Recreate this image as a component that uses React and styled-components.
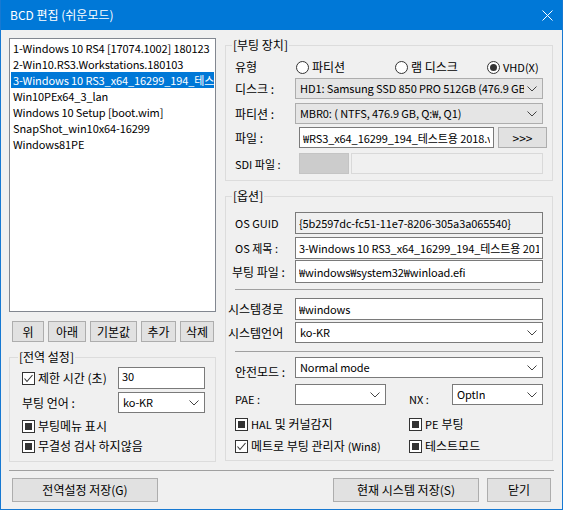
import React from 'react'
import styled, { createGlobalStyle } from 'styled-components'

const GlobalStyle = createGlobalStyle`
    html, body {
        margin: 0;
        padding: 0;
        background: #f0f0f0;
    }
    body {
        font-family: "Noto Sans CJK KR", "Liberation Sans", sans-serif;
        font-size: 12px;
        color: #000;
    }
    * {
        box-sizing: border-box;
    }
`

const entries = [
    '1-Windows 10 RS4 [17074.1002] 180123',
    '2-Win10.RS3.Workstations.180103',
    '3-Windows 10 RS3_x64_16299_194_테스트용 2018',
    'Win10PEx64_3_lan',
    'Windows 10 Setup [boot.wim]',
    'SnapShot_win10x64-16299',
    'Windows81PE',
]

function Chevron() {
    return (
        <svg width="10" height="6" viewBox="0 0 10 6">
            <polyline points="0.5,0.5 5,5 9.5,0.5" fill="none" stroke="#444" strokeWidth="1" />
        </svg>
    )
}

function Select({ children, $gray }) {
    return (
        <SelectBox $gray={$gray}>
            <SelectText>{children}</SelectText>
            <Chevron />
        </SelectBox>
    )
}

function Check({ state, children }) {
    return (
        <CheckLabel>
            <CheckBox>
                {state === 'mixed' && <CheckFill />}
                {state === 'checked' && (
                    <svg width="11" height="11" viewBox="0 0 11 11">
                        <polyline points="1.5,5.5 4,8.5 9.5,2" fill="none" stroke="#333" strokeWidth="1.1" />
                    </svg>
                )}
            </CheckBox>
            {children}
        </CheckLabel>
    )
}

function Radio({ checked, children, $w }) {
    return (
        <RadioLabel $w={$w}>
            <RadioCircle>{checked && <RadioDot />}</RadioCircle>
            {children}
        </RadioLabel>
    )
}

export default function App() {
    return (
        <>
            <GlobalStyle />
            <Window>
                <TitleBar>
                    <span>BCD 편집 (쉬운모드)</span>
                    <svg width="11" height="11" viewBox="0 0 11 11">
                        <path d="M0.5 0.5 L10.5 10.5 M10.5 0.5 L0.5 10.5" stroke="#fff" strokeWidth="1" />
                    </svg>
                </TitleBar>

                <Body>
                    <LeftCol>
                        <ListBox>
                            {entries.map((e, i) => (
                                <ListItem key={e} $selected={i === 2}>{e}</ListItem>
                            ))}
                        </ListBox>

                        <ButtonRow>
                            <Button $w={32}>위</Button>
                            <Button $w={38}>아래</Button>
                            <Button $w={47}>기본값</Button>
                            <Button $w={35}>추가</Button>
                            <Button $w={34}>삭제</Button>
                        </ButtonRow>

                        <GroupBox $pad="3px 9px 8px 12px" $mt={8}>
                            <Legend $ml={-4}>[전역 설정]</Legend>
                            <Row $cols="96px 87px" $h={22}>
                                <Check state="checked">제한 시간 (초)</Check>
                                <TextBox readOnly value="30" $top />
                            </Row>
                            <Row $cols="96px 87px" $h={21} $mt={3}>
                                <Label>부팅 언어 :</Label>
                                <Select>ko-KR</Select>
                            </Row>
                            <CheckRow $mt={6}>
                                <Check state="mixed">부팅메뉴 표시</Check>
                            </CheckRow>
                            <CheckRow $mt={6}>
                                <Check state="mixed">무결성 검사 하지않음</Check>
                            </CheckRow>
                        </GroupBox>
                    </LeftCol>

                    <RightCol>
                        <GroupBox $pad="5px 9px 6px 9px">
                            <Legend $ml={-3}>[부팅 장치]</Legend>
                            <Row $cols="60px 1fr" $h={20}>
                                <Label>유형</Label>
                                <RadioGroup>
                                    <Radio $w={99}>파티션</Radio>
                                    <Radio $w={92}>램 디스크</Radio>
                                    <Radio checked><Small>VHD(X)</Small></Radio>
                                </RadioGroup>
                            </Row>
                            <Row $cols="60px 1fr" $h={21} $mt={1}>
                                <Label>디스크 :</Label>
                                <Select $gray>HD1: Samsung SSD 850 PRO 512GB (476.9 GB,</Select>
                            </Row>
                            <Row $cols="60px 1fr" $h={21} $mt={4}>
                                <Label>파티션 :</Label>
                                <Select $gray>MBR0: ( NTFS, 476.9 GB, Q:₩, Q1)</Select>
                            </Row>
                            <Row $cols="60px 195px 49px" $gap={4} $h={21} $mt={3}>
                                <Label>파일 :</Label>
                                <TextBox readOnly value="₩RS3_x64_16299_194_테스트용 2018.vhdx" />
                                <Button $w={49}>&gt;&gt;&gt;</Button>
                            </Row>
                            <Row $cols="62px 50px 1fr" $gap={2} $h={21} $mt={5}>
                                <Label $small>SDI 파일 :</Label>
                                <Swatch />
                                <TextBox readOnly value="" $disabled />
                            </Row>
                        </GroupBox>

                        <GroupBox $pad="9px 9px 8px 9px">
                            <Legend $ml={-3}>[옵션]</Legend>
                            <Row $cols="60px 1fr" $h={22}>
                                <Label $small>OS GUID</Label>
                                <TextBox readOnly value="{5b2597dc-fc51-11e7-8206-305a3a065540}" $gray />
                            </Row>
                            <Row $cols="60px 1fr" $h={22} $mt={3}>
                                <Label $small>OS 제목 :</Label>
                                <TextBox readOnly value="3-Windows 10 RS3_x64_16299_194_테스트용 2018" />
                            </Row>
                            <Row $cols="60px 1fr" $h={23} $mt={1}>
                                <Label $indent={-3}>부팅 파일 :</Label>
                                <TextBox readOnly value="₩windows₩system32₩winload.efi" />
                            </Row>
                            <Divider $mt={6} />
                            <Row $cols="60px 1fr" $h={22} $mt={8}>
                                <Label $indent={-7}>시스템경로</Label>
                                <TextBox readOnly value="₩windows" />
                            </Row>
                            <Row $cols="60px 1fr" $h={21} $mt={2}>
                                <Label $indent={-7}>시스템언어</Label>
                                <Select>ko-KR</Select>
                            </Row>
                            <Divider $mt={8} />
                            <Row $cols="60px 1fr" $h={21} $mt={5}>
                                <Label $shift={4}>안전모드 :</Label>
                                <Select>Normal mode</Select>
                            </Row>
                            <Row $cols="60px 91px 23px 43px 1fr" $h={21} $mt={6}>
                                <Label $small $shift={4}>PAE :</Label>
                                <Select />
                                <span />
                                <Label $small $shift={4}>NX :</Label>
                                <Select>OptIn</Select>
                            </Row>
                            <Row $cols="174px 1fr" $h={14} $mt={11}>
                                <Check state="mixed"><Small>HAL</Small> 및 커널감지</Check>
                                <Check state="mixed"><Small>PE</Small> 부팅</Check>
                            </Row>
                            <Row $cols="174px 1fr" $h={14} $mt={8}>
                                <Check state="checked">메트로 부팅 관리자<Small>(Win8)</Small></Check>
                                <Check state="mixed">테스트모드</Check>
                            </Row>
                        </GroupBox>
                    </RightCol>
                </Body>

                <Separator />

                <Footer>
                    <Button $w={146} $h={24}>전역설정 저장(G)</Button>
                    <FooterRight>
                        <Button $w={146} $h={24}>현재 시스템 저장(S)</Button>
                        <Button $w={64} $h={24}>닫기</Button>
                    </FooterRight>
                </Footer>
            </Window>
        </>
    )
}

const Window = styled.div`
    width: 563px;
    height: 510px;
    display: flex;
    flex-direction: column;
    background: #f0f0f0;
    border: 1px solid #1779d2;
    border-top: none;
`

const TitleBar = styled.div`
    height: 30px;
    flex-shrink: 0;
    background: #0078d7;
    color: #fff;
    display: flex;
    align-items: center;
    justify-content: space-between;
    padding: 0 9px 0 9px;
    font-size: 12px;
    line-height: 16px;
`

const Body = styled.div`
    display: flex;
    align-items: flex-start;
    gap: 9px;
    padding: 8px 9px 0 8px;
`

const LeftCol = styled.div`
    width: 207px;
    display: flex;
    flex-direction: column;
`

const RightCol = styled.div`
    width: 328px;
    display: flex;
    flex-direction: column;
    gap: 8px;
`

const ListBox = styled.div`
    height: 274px;
    background: #fff;
    border: 1px solid #828790;
    padding: 1px 1px;
    overflow: hidden;
`

const ListItem = styled.div`
    height: 16px;
    line-height: 16px;
    padding: 0 2px;
    font-size: 11px;
    letter-spacing: -0.1px;
    white-space: nowrap;
    overflow: hidden;
    background: ${p => (p.$selected ? '#0078d7' : 'transparent')};
    color: ${p => (p.$selected ? '#fff' : '#000')};
`

const ButtonRow = styled.div`
    display: flex;
    gap: 4px;
    margin-top: 9px;
    padding-left: 3px;
`

const Button = styled.button`
    width: ${p => p.$w}px;
    height: ${p => p.$h || 21}px;
    padding: 0;
    background: #e1e1e1;
    border: 1px solid #adadad;
    font-family: inherit;
    font-size: 12px;
    line-height: 16px;
    color: #000;
`

const GroupBox = styled.fieldset`
    margin: ${p => p.$mt || 0}px 0 0 0;
    min-width: 0;
    border: 1px solid #dcdcdc;
    padding: ${p => p.$pad};
`

const Legend = styled.legend`
    font-size: 12px;
    line-height: 14px;
    padding: 0 1px;
    margin-left: ${p => p.$ml}px;
`

const Row = styled.div`
    display: grid;
    grid-template-columns: ${p => p.$cols};
    column-gap: ${p => p.$gap || 0}px;
    align-items: center;
    height: ${p => p.$h}px;
    margin-top: ${p => p.$mt || 0}px;

    & > * {
        height: 100%;
    }
    & > label, & > span {
        height: auto;
    }
`

const CheckRow = styled.div`
    display: flex;
    height: 14px;
    align-items: center;
    margin-top: ${p => p.$mt || 0}px;
`

const Label = styled.span`
    font-size: ${p => (p.$small ? 11 : 12)}px;
    line-height: 16px;
    white-space: nowrap;
    margin-left: ${p => p.$indent || 0}px;
    position: relative;
    top: ${p => p.$shift || 0}px;
`

const Small = styled.span`
    font-size: 11px;
`

const TextBox = styled.input`
    width: 100%;
    min-width: 0;
    margin: 0;
    padding: ${p => (p.$top ? '0 3px 4px' : '0 3px')};
    font-family: inherit;
    font-size: 11px;
    letter-spacing: -0.1px;
    color: #000;
    border: 1px solid ${p => (p.$disabled ? '#d9d9d9' : '#7a7a7a')};
    background: ${p => (p.$gray || p.$disabled ? '#f0f0f0' : '#fff')};
    outline: none;
`

const Swatch = styled.div`
    background: #cccccc;
    border: 1px solid #c4c4c4;
`

const SelectBox = styled.div`
    display: flex;
    align-items: center;
    justify-content: space-between;
    gap: 3px;
    padding: 0 5px 0 4px;
    min-width: 0;
    border: 1px solid ${p => (p.$gray ? '#adadad' : '#7a7a7a')};
    background: ${p => (p.$gray ? '#e5e5e5' : '#fff')};

    svg {
        flex-shrink: 0;
    }
`

const SelectText = styled.span`
    overflow: hidden;
    white-space: nowrap;
    font-size: 11px;
    letter-spacing: -0.1px;
    line-height: 17px;
`

const CheckLabel = styled.label`
    display: flex;
    align-items: center;
    gap: 3px;
    font-size: 12px;
    line-height: 16px;
    white-space: nowrap;
`

const CheckBox = styled.span`
    width: 13px;
    height: 13px;
    flex-shrink: 0;
    display: flex;
    align-items: center;
    justify-content: center;
    border: 1px solid #333;
    background: #fff;
`

const CheckFill = styled.span`
    width: 7px;
    height: 7px;
    background: #333;
`

const RadioGroup = styled.div`
    display: flex;
    align-items: center;
`

const RadioLabel = styled.label`
    width: ${p => (p.$w ? `${p.$w}px` : 'auto')};
    display: flex;
    align-items: center;
    gap: 3px;
    font-size: 12px;
    line-height: 16px;
    white-space: nowrap;
    padding-left: 1px;
`

const RadioCircle = styled.span`
    width: 13px;
    height: 13px;
    border-radius: 50%;
    border: 1px solid #333;
    background: #fff;
    display: flex;
    align-items: center;
    justify-content: center;
`

const RadioDot = styled.span`
    width: 7px;
    height: 7px;
    border-radius: 50%;
    background: #333;
`

const Divider = styled.div`
    height: 1px;
    background: #a0a0a0;
    margin: ${p => p.$mt}px 3px 0 0;
`

const Separator = styled.div`
    height: 1px;
    background: #a0a0a0;
    margin: 8px 8px 0 8px;
    flex-shrink: 0;
`

const Footer = styled.div`
    display: flex;
    justify-content: space-between;
    padding: 7px 11px 0 11px;
`

const FooterRight = styled.div`
    display: flex;
    gap: 8px;
`
